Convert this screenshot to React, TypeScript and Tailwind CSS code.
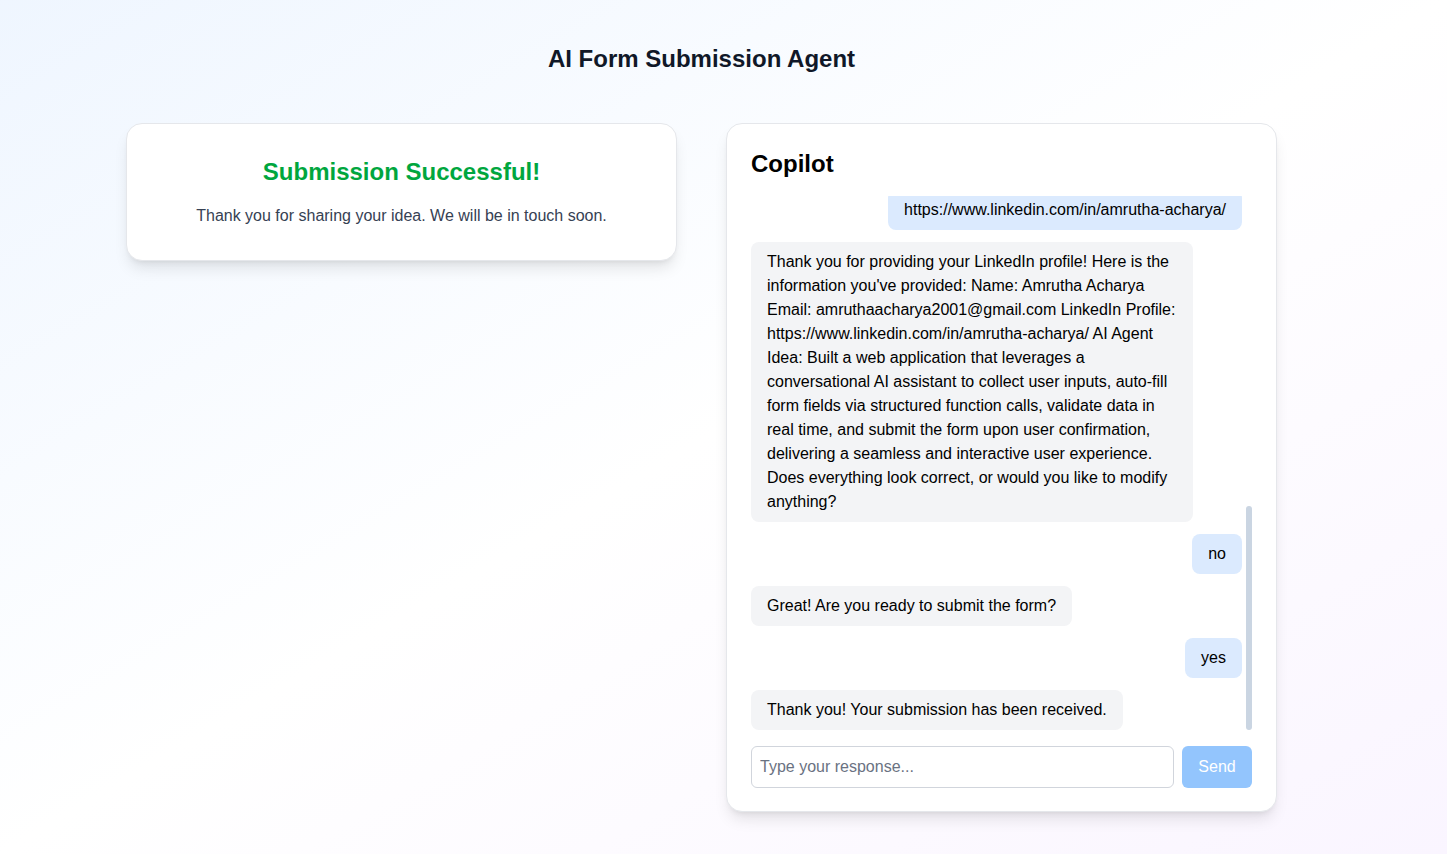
import React, { useLayoutEffect, useRef } from "react";

type Msg = { from: "bot" | "user"; text: string };

const messages: Msg[] = [
  { from: "bot", text: "Hi there! I'm your AI assistant. I'll help you submit your AI agent idea. Let's get started — what's your full name?" },
  { from: "user", text: "Amrutha Acharya" },
  { from: "bot", text: "Nice to meet you, Amrutha Acharya! What's your email address?" },
  { from: "user", text: "amruthaacharya2001@gmail.com" },
  { from: "bot", text: "Thanks! Please describe your AI agent idea." },
  { from: "user", text: "Built a web application that leverages a conversational AI assistant to collect user inputs, auto-fill form fields via structured function calls, validate data in real time, and submit the form upon user confirmation, delivering a seamless and interactive user experience." },
  { from: "bot", text: "That sounds like a great idea! Could you share your LinkedIn profile URL?" },
  { from: "user", text: "https://www.linkedin.com/in/amrutha-acharya/" },
  { from: "bot", text: "Thank you for providing your LinkedIn profile! Here is the information you've provided: Name: Amrutha Acharya Email: amruthaacharya2001@gmail.com LinkedIn Profile: https://www.linkedin.com/in/amrutha-acharya/ AI Agent Idea: Built a web application that leverages a conversational AI assistant to collect user inputs, auto-fill form fields via structured function calls, validate data in real time, and submit the form upon user confirmation, delivering a seamless and interactive user experience. Does everything look correct, or would you like to modify anything?" },
  { from: "user", text: "no" },
  { from: "bot", text: "Great! Are you ready to submit the form?" },
  { from: "user", text: "yes" },
  { from: "bot", text: "Thank you! Your submission has been received." },
];

export default function App() {
  const ref = useRef<HTMLDivElement>(null);
  useLayoutEffect(() => {
    if (ref.current) ref.current.scrollTop = ref.current.scrollHeight;
  }, []);

  return (
    <div
      className="min-h-screen w-full bg-linear-to-br from-blue-50 via-white to-purple-50 text-gray-900"
      style={{ fontFamily: '"Liberation Sans", Arial, sans-serif' }}
    >
      <div className="w-[1151px] ml-[126px] flex flex-col items-center pt-[43px]">
        <h1 className="text-2xl leading-8 font-bold text-gray-900 mb-[48px]">AI Form Submission Agent</h1>
        <div className="w-full flex gap-[49px] items-start">
          <div className="w-[551px] bg-white rounded-2xl border border-gray-200 shadow-lg p-8 text-center">
            <h2 className="text-2xl leading-8 font-bold text-green-600 mb-4">Submission Successful!</h2>
            <p className="text-base leading-6 text-gray-700">Thank you for sharing your idea. We will be in touch soon.</p>
          </div>
          <div className="w-[551px] h-[689px] bg-white rounded-2xl border border-gray-200 shadow-lg p-6 flex flex-col">
            <h2 className="text-2xl leading-8 font-bold text-black mb-4">Copilot</h2>
            <div className="h-[534px] flex gap-1">
              <div
                ref={ref}
                className="flex-1 overflow-y-auto flex flex-col gap-3 [scrollbar-width:none]"
              >
                {messages.map((m, i) => (
                  <div key={i} className={m.from === "user" ? "flex justify-end" : "flex justify-start"}>
                    <div
                      className={
                        m.from === "user"
                          ? "max-w-[90%] rounded-lg bg-blue-100 px-4 py-2 text-base leading-6 text-black"
                          : "max-w-[90%] rounded-lg bg-gray-100 px-4 py-2 text-base leading-6 text-black"
                      }
                    >
                      {m.text}
                    </div>
                  </div>
                ))}
              </div>
              <div className="w-[6px] flex flex-col justify-end">
                <div className="h-[224px] w-[6px] rounded-full bg-slate-300" />
              </div>
            </div>
            <div className="flex gap-2 mt-4">
              <input
                className="flex-1 h-[42px] border border-gray-300 rounded-md px-2 text-base outline-none placeholder:text-gray-500"
                placeholder="Type your response..."
              />
              <button className="h-[42px] w-[70px] rounded-md bg-[#93c5fd] text-white text-base">Send</button>
            </div>
          </div>
        </div>
      </div>
    </div>
  );
}
